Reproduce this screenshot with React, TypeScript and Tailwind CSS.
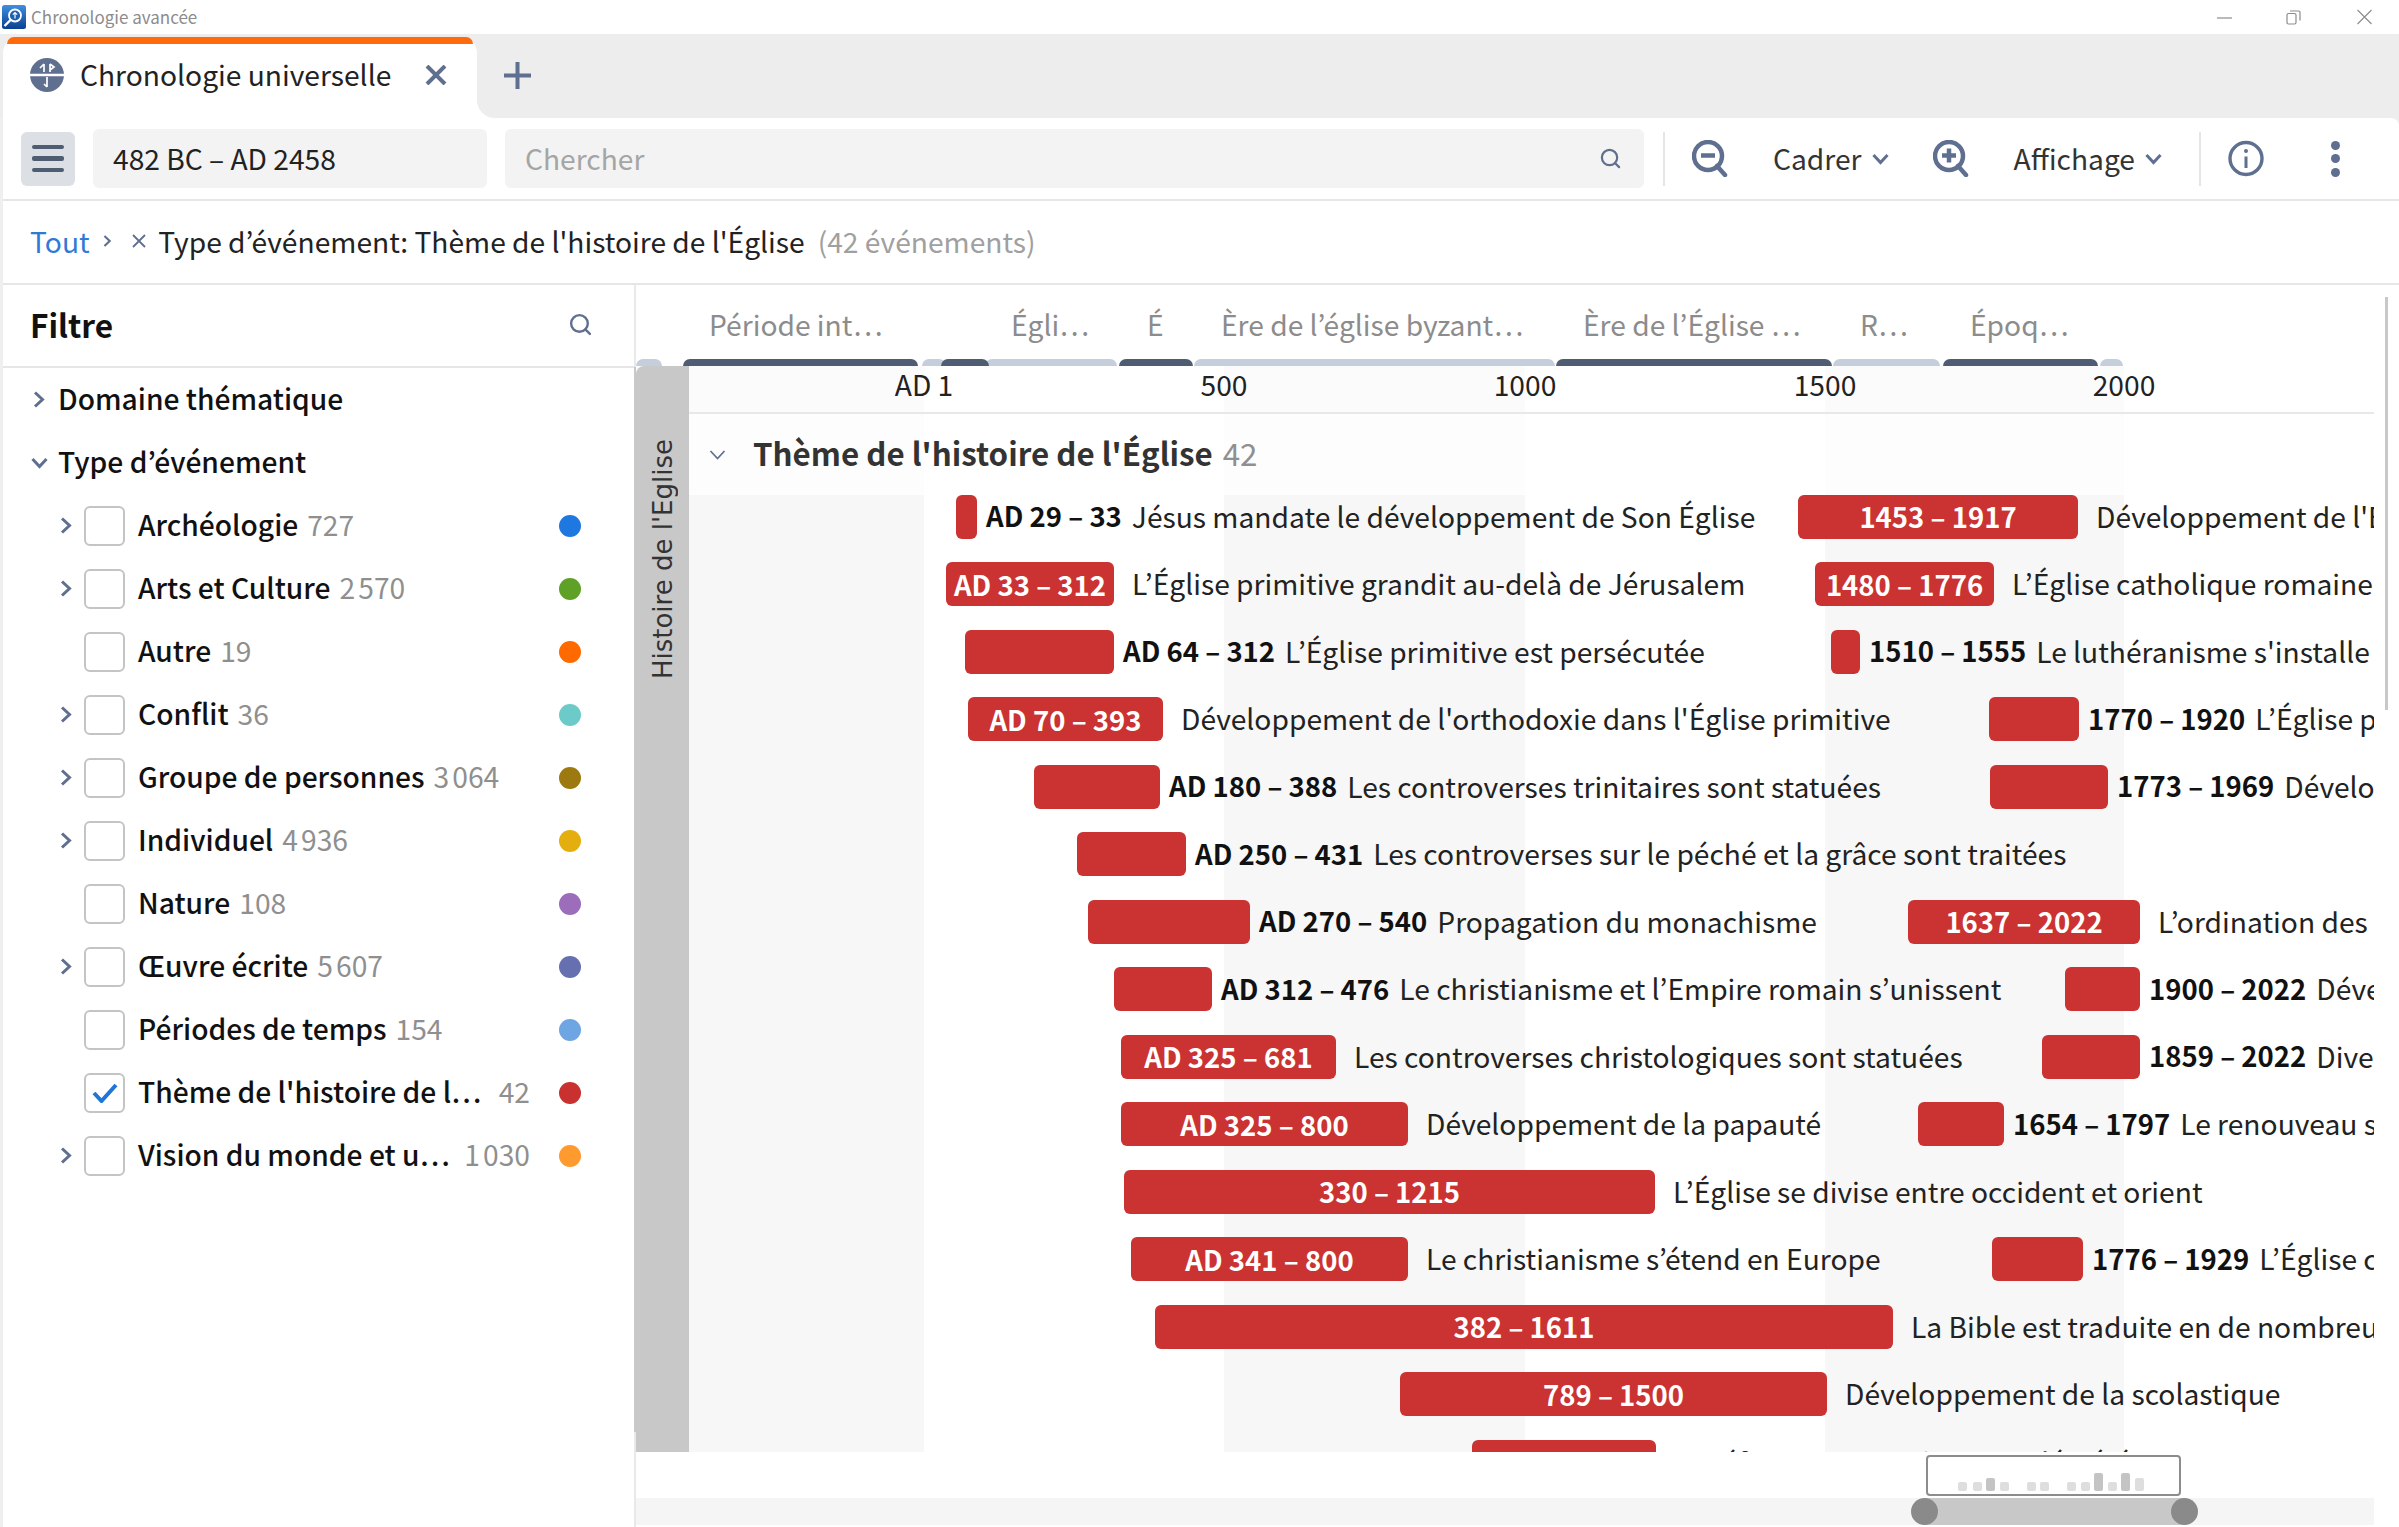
import { Search } from "lucide-react";

const CHART_LEFT = 689;

type TimelineEvent = {
  x: number;
  w: number;
  range: string;
  text: string;
  inside?: boolean;
};

const ROWS: TimelineEvent[][] = [
  [
    { x: 956, w: 21, range: "AD 29 – 33", text: "Jésus mandate le développement de Son Église" },
    { x: 1798, w: 280, range: "1453 – 1917", text: "Développement de l'Église", inside: true },
  ],
  [
    { x: 946, w: 168, range: "AD 33 – 312", text: "L’Église primitive grandit au-delà de Jérusalem", inside: true },
    { x: 1815, w: 179, range: "1480 – 1776", text: "L’Église catholique romaine", inside: true },
  ],
  [
    { x: 965, w: 149, range: "AD 64 – 312", text: "L’Église primitive est persécutée" },
    { x: 1831, w: 29, range: "1510 – 1555", text: "Le luthéranisme s'installe" },
  ],
  [
    { x: 968, w: 195, range: "AD 70 – 393", text: "Développement de l'orthodoxie dans l'Église primitive", inside: true },
    { x: 1989, w: 90, range: "1770 – 1920", text: "L’Église protestante" },
  ],
  [
    { x: 1034, w: 126, range: "AD 180 – 388", text: "Les controverses trinitaires sont statuées" },
    { x: 1990, w: 118, range: "1773 – 1969", text: "Développement" },
  ],
  [{ x: 1077, w: 109, range: "AD 250 – 431", text: "Les controverses sur le péché et la grâce sont traitées" }],
  [
    { x: 1088, w: 162, range: "AD 270 – 540", text: "Propagation du monachisme" },
    { x: 1908, w: 232, range: "1637 – 2022", text: "L’ordination des femmes", inside: true },
  ],
  [
    { x: 1114, w: 98, range: "AD 312 – 476", text: "Le christianisme et l’Empire romain s’unissent" },
    { x: 2065, w: 75, range: "1900 – 2022", text: "Développement" },
  ],
  [
    { x: 1121, w: 215, range: "AD 325 – 681", text: "Les controverses christologiques sont statuées", inside: true },
    { x: 2042, w: 98, range: "1859 – 2022", text: "Diversité" },
  ],
  [
    { x: 1121, w: 287, range: "AD 325 – 800", text: "Développement de la papauté", inside: true },
    { x: 1918, w: 86, range: "1654 – 1797", text: "Le renouveau spirituel" },
  ],
  [{ x: 1124, w: 531, range: "330 – 1215", text: "L’Église se divise entre occident et orient", inside: true }],
  [
    { x: 1131, w: 277, range: "AD 341 – 800", text: "Le christianisme s’étend en Europe", inside: true },
    { x: 1992, w: 91, range: "1776 – 1929", text: "L’Église catholique" },
  ],
  [{ x: 1155, w: 738, range: "382 – 1611", text: "La Bible est traduite en de nombreuses langues", inside: true }],
  [{ x: 1400, w: 427, range: "789 – 1500", text: "Développement de la scolastique", inside: true }],
  [{ x: 1472, w: 184, range: "1054 – 1350", text: "La réforme monastique est décrétée", inside: true }],
];

const ERA_LABELS = [
  { x: 709, label: "Période int…" },
  { x: 1011, label: "Égli…" },
  { x: 1147, label: "É" },
  { x: 1221, label: "Ère de l’église byzant…" },
  { x: 1583, label: "Ère de l’Église …" },
  { x: 1860, label: "R…" },
  { x: 1970, label: "Époq…" },
];

const ERA_BARS = [
  { x: 636, w: 26, dark: false },
  { x: 683, w: 235, dark: true },
  { x: 922, w: 24, dark: false },
  { x: 941, w: 48, dark: true },
  { x: 985, w: 132, dark: false },
  { x: 1119, w: 74, dark: true },
  { x: 1194, w: 361, dark: false },
  { x: 1556, w: 276, dark: true },
  { x: 1833, w: 107, dark: false },
  { x: 1943, w: 155, dark: true },
  { x: 2100, w: 23, dark: false },
];

const TICKS = [
  { x: 924, label: "AD 1" },
  { x: 1224, label: "500" },
  { x: 1525, label: "1000" },
  { x: 1825, label: "1500" },
  { x: 2124, label: "2000" },
];

const STRIPES = [
  { x: 689, w: 235 },
  { x: 1224, w: 301 },
  { x: 1825, w: 299 },
];

const FILTERS = [
  { label: "Archéologie", count: "727", color: "#1e78e0", expand: true },
  { label: "Arts et Culture", count: "2\u202f570", color: "#5ea126", expand: true },
  { label: "Autre", count: "19", color: "#ff6a00" },
  { label: "Conflit", count: "36", color: "#6ccbc9", expand: true },
  { label: "Groupe de personnes", count: "3\u202f064", color: "#9c7a10", expand: true },
  { label: "Individuel", count: "4\u202f936", color: "#e5ae0f", expand: true },
  { label: "Nature", count: "108", color: "#9b6dba" },
  { label: "Œuvre écrite", count: "5\u202f607", color: "#6670b0", expand: true },
  { label: "Périodes de temps", count: "154", color: "#6ea5e3" },
  { label: "Thème de l'histoire de l…", count: "42", color: "#c93131", checked: true, fill: true },
  { label: "Vision du monde et u…", count: "1\u202f030", color: "#ff9a2e", expand: true, fill: true },
];

const MINI_BARS = [
  { x: 32, h: 9 },
  { x: 47, h: 9 },
  { x: 60, h: 13, dark: true },
  { x: 74, h: 9 },
  { x: 101, h: 9 },
  { x: 114, h: 9 },
  { x: 141, h: 9 },
  { x: 155, h: 9 },
  { x: 168, h: 18, dark: true },
  { x: 182, h: 9 },
  { x: 195, h: 18, dark: true },
  { x: 209, h: 13 },
];

function ChevronRight({ className = "" }: { className?: string }) {
  return (
    <svg viewBox="0 0 12 17" className={className} fill="none" stroke="currentColor" strokeWidth="3">
      <path d="M2 1.5 9.5 8.5 2 15.5" />
    </svg>
  );
}

function ChevronDown({ className = "", thin = false }: { className?: string; thin?: boolean }) {
  return (
    <svg viewBox="0 0 17 12" className={className} fill="none" stroke="currentColor" strokeWidth={thin ? 1.7 : 3}>
      <path d="M1.5 2 8.5 9.5 15.5 2" />
    </svg>
  );
}

function ZoomIcon({ plus = false }: { plus?: boolean }) {
  return (
    <svg viewBox="0 0 36 37" className="h-[37px] w-[36px] text-[#5f6f8f]" fill="none" stroke="currentColor">
      <circle cx="16" cy="16" r="14" strokeWidth="4.5" />
      <path d="M25 26 33 35" strokeWidth="4.5" strokeLinecap="round" />
      <path d="M9 15.5H23" strokeWidth="4.5" />
      {plus && <path d="M16 8.5V22.5" strokeWidth="4.5" />}
    </svg>
  );
}

function AppIcon() {
  return (
    <svg viewBox="0 0 24 24" className="ml-[2px] h-[24px] w-[24px]">
      <defs>
        <linearGradient id="appGrad" x1="0" y1="0" x2="0" y2="1">
          <stop offset="0" stopColor="#3f8fe0" />
          <stop offset="1" stopColor="#0b3f8f" />
        </linearGradient>
      </defs>
      <rect width="24" height="24" rx="2.5" fill="url(#appGrad)" />
      <circle cx="13" cy="10.5" r="6" fill="#1d5fb0" stroke="#fff" strokeWidth="1.8" />
      <path d="M8.5 15 2.5 21" stroke="#fff" strokeWidth="2.4" />
      <path d="M13 7.5V13.5M10.8 9.6 13 7.5 15.2 9.6" stroke="#fff" strokeWidth="1.2" fill="none" />
    </svg>
  );
}

function TabIcon() {
  return (
    <svg viewBox="0 0 34 34" className="h-[34px] w-[34px]">
      <circle cx="17" cy="17" r="17" fill="#5f6f8f" />
      <path d="M0 17H34" stroke="#fff" strokeWidth="2.5" />
      <path d="M14 6V14M14 6 10 10M20 6V14M20 6 24 9 20 12M17 19V29M17 29 14 26" stroke="#fff" strokeWidth="1.7" fill="none" />
    </svg>
  );
}

function WindowControls() {
  return (
    <div className="flex items-center text-[#8c8c8c]">
      <svg viewBox="0 0 15 15" className="h-[15px] w-[15px]" stroke="currentColor" fill="none">
        <path d="M0 8H15" strokeWidth="1.2" />
      </svg>
      <svg viewBox="0 0 15 15" className="ml-[54px] h-[16px] w-[15px]" stroke="currentColor" fill="none">
        <rect x="1" y="4" width="9" height="10.5" rx="1.5" strokeWidth="1.2" />
        <path d="M4 1.5H12.5A1.5 1.5 0 0 1 14 3V11" strokeWidth="1.2" />
      </svg>
      <svg viewBox="0 0 15 15" className="ml-[56px] h-[16px] w-[15px]" stroke="currentColor" fill="none">
        <path d="M0.5 0.5 14.5 14.5M14.5 0.5 0.5 14.5" strokeWidth="1.1" />
      </svg>
    </div>
  );
}

function TabBar() {
  return (
    <div className="flex h-[84px] bg-white">
      <div className="bg-[#ededed] pl-[3px] pt-[3px]">
        <div className="flex h-[81px] w-[474px] flex-col rounded-t-[16px] bg-white">
          <div className="mx-[4px] h-[7px] shrink-0 rounded-t-[12px] bg-[#ff6a0a]" />
          <div className="flex flex-1 items-center pb-[12px] pl-[27px]">
            <TabIcon />
            <span className="mb-[2px] ml-[16px] text-[28.2px] leading-none text-[#222]">Chronologie universelle</span>
            <svg viewBox="0 0 22 20" className="ml-[34px] h-[20px] w-[22px] text-[#5f6f8f]" stroke="currentColor" fill="none">
              <path d="M2 1 20 19M20 1 2 19" strokeWidth="4" />
            </svg>
          </div>
        </div>
      </div>
      <div className="flex-1 rounded-bl-[18px] bg-[#ededed] pb-[4px] pl-[27px] pt-[3px]">
        <div className="flex h-full items-center">
          <svg viewBox="0 0 27 27" className="h-[27px] w-[27px] text-[#5f6f8f]" stroke="currentColor" fill="none">
            <path d="M13.5 0V27M0 13.5H27" strokeWidth="4" />
          </svg>
        </div>
      </div>
    </div>
  );
}

function Toolbar() {
  return (
    <div className="bg-[#ededed]">
      <div className="flex h-[83px] items-center rounded-tr-[8px] border-b-2 border-[#e6e6e6] bg-white pl-[18px] text-[28.2px]">
        <div className="flex h-[54px] w-[54px] flex-col items-center justify-center gap-[7px] rounded-[6px] bg-[#dcdfe3]">
          <span className="h-[4.5px] w-[32px] rounded-[2px] bg-[#4f5d73]" />
          <span className="h-[4.5px] w-[32px] rounded-[2px] bg-[#4f5d73]" />
          <span className="h-[4.5px] w-[32px] rounded-[2px] bg-[#4f5d73]" />
        </div>
        <div className="ml-[18px] flex h-[59px] w-[394px] items-center rounded-[6px] bg-[#f3f3f3] pl-[20px] text-[#222]">
          482 BC – AD 2458
        </div>
        <div className="ml-[18px] flex h-[59px] w-[1139px] items-center justify-between rounded-[6px] bg-[#f3f3f3] pl-[20px] pr-[22px] text-[#a5a5a5]">
          <span>Chercher</span>
          <Search size={23} strokeWidth={2.3} className="text-[#5f6f8f]" />
        </div>
        <div className="ml-[19px] h-[54px] w-[2px] bg-[#e6e6e6]" />
        <div className="ml-[27px]">
          <ZoomIcon />
        </div>
        <span className="ml-[45px] text-[#333]">Cadrer</span>
        <ChevronDown className="ml-[10px] h-[12px] w-[17px] text-[#5f6f8f]" />
        <div className="ml-[44px]">
          <ZoomIcon plus />
        </div>
        <span className="ml-[45px] text-[#333]">Affichage</span>
        <ChevronDown className="ml-[10px] h-[12px] w-[17px] text-[#5f6f8f]" />
        <div className="ml-[37px] h-[54px] w-[2px] bg-[#e6e6e6]" />
        <svg viewBox="0 0 36 37" className="ml-[27px] h-[37px] w-[36px] text-[#5f6f8f]" fill="none" stroke="currentColor">
          <circle cx="18" cy="18.5" r="16" strokeWidth="3.4" />
          <path d="M18 16.5V28" strokeWidth="3" />
          <circle cx="18" cy="11" r="2" fill="currentColor" stroke="none" />
        </svg>
        <div className="ml-[67px] flex flex-col gap-[4.5px]">
          <span className="h-[9px] w-[9px] rounded-full bg-[#5f6f8f]" />
          <span className="h-[9px] w-[9px] rounded-full bg-[#5f6f8f]" />
          <span className="h-[9px] w-[9px] rounded-full bg-[#5f6f8f]" />
        </div>
      </div>
    </div>
  );
}

function Breadcrumb() {
  return (
    <div className="flex h-[84px] items-center border-b-2 border-[#e6e6e6] pb-[2px] pl-[27px] text-[28.2px]">
      <span className="text-[#2f7ad6]">Tout</span>
      <ChevronRight className="ml-[13px] h-[12px] w-[8.5px] text-[#5f6f8f]" />
      <svg viewBox="0 0 14 14" className="ml-[21px] h-[14px] w-[14px] text-[#5f6f8f]" stroke="currentColor" fill="none">
        <path d="M1 1 13 13M13 1 1 13" strokeWidth="1.8" />
      </svg>
      <span className="ml-[12px] text-[#222]">Type d’événement: Thème de l'histoire de l'Église</span>
      <span className="ml-[13px] text-[#a0a0a0]">(42 événements)</span>
    </div>
  );
}

function FilterRow({ item }: { item: (typeof FILTERS)[number] }) {
  return (
    <div className="flex h-[63px] items-center pl-[57px]">
      <div className="flex w-[24px] items-center">{item.expand && <ChevronRight className="h-[17px] w-[12px] text-[#5f6f8f]" />}</div>
      <div className="flex h-[40px] w-[41px] items-center justify-center rounded-[6px] border-2 border-[#c4c4c4]">
        {item.checked && (
          <svg viewBox="0 0 26 20" className="h-[20px] w-[26px] text-[#1f75d8]" fill="none" stroke="currentColor">
            <path d="M2 10 9.5 18 24 2" strokeWidth="4" />
          </svg>
        )}
      </div>
      <div className={"ml-[13px] flex w-[392px] items-center pb-[2px] text-[28.2px] " + (item.fill ? "justify-between" : "")}>
        <span className="font-medium text-[#111]">{item.label}</span>
        <span className="ml-[9px] text-[#8f8f8f]">{item.count}</span>
      </div>
      <span className="ml-[29px] h-[22px] w-[22px] shrink-0 rounded-full" style={{ backgroundColor: item.color }} />
    </div>
  );
}

function Sidebar() {
  return (
    <aside className="relative w-[633px] shrink-0 border-r-2 border-[#e9e9e9]">
      <div className="flex h-[83px] items-center justify-between border-b-2 border-[#e6e6e6] pb-[2px] pl-[27px] pr-[41px]">
        <span className="text-[31.6px] font-semibold text-[#111]">Filtre</span>
        <Search size={25} strokeWidth={2.3} className="text-[#5f6f8f]" />
      </div>
      <div className="flex h-[63px] items-center pl-[30px] text-[28.2px] font-medium text-[#111]">
        <ChevronRight className="h-[17px] w-[12px] text-[#5f6f8f]" />
        <span className="mb-[2px] ml-[13px]">Domaine thématique</span>
      </div>
      <div className="flex h-[63px] items-center pl-[28px] text-[28.2px] font-medium text-[#111]">
        <ChevronDown className="h-[12px] w-[17px] text-[#5f6f8f]" />
        <span className="mb-[2px] ml-[10px]">Type d’événement</span>
      </div>
      {FILTERS.map((item) => (
        <FilterRow key={item.label} item={item} />
      ))}
      <div className="absolute -right-[2px] top-[82px] h-[1065px] w-[2px] bg-[#c8c8c8]" />
    </aside>
  );
}

function EventItem({ event }: { event: TimelineEvent }) {
  return (
    <div className="absolute top-0 flex h-full items-center whitespace-nowrap text-[28.2px]" style={{ left: event.x - CHART_LEFT }}>
      <div
        className="flex h-[44px] items-center justify-center overflow-hidden rounded-[6px] bg-[#cb3232] text-[27.5px] font-semibold text-white"
        style={{ width: event.w }}
      >
        {event.inside && event.range}
      </div>
      {!event.inside && <span className="mb-[2px] ml-[9px] text-[27.5px] font-semibold text-[#111]">{event.range}</span>}
      <span className={"mb-[2px] text-[#222] " + (event.inside ? "ml-[18px]" : "ml-[10px]")}>{event.text}</span>
    </div>
  );
}

function EraHeader() {
  return (
    <div className="relative h-[81px] text-[28.2px] text-[#8c8c8c]">
      {ERA_LABELS.map((era) => (
        <span key={era.x} className="absolute top-[19px] whitespace-nowrap leading-[40px]" style={{ left: era.x - 636 }}>
          {era.label}
        </span>
      ))}
      {ERA_BARS.map((bar) => (
        <div
          key={bar.x}
          className={"absolute bottom-0 h-[7px] rounded-t-[7px] " + (bar.dark ? "z-10 bg-[#4f5d73]" : "bg-[#c5cfdc]")}
          style={{ left: bar.x - 636, width: bar.w }}
        />
      ))}
    </div>
  );
}

function Timeline() {
  return (
    <div className="flex h-[1086px]">
      <div className="flex w-[53px] shrink-0 justify-center rounded-tl-[8px] bg-[#c8c8c8] pt-[73px]">
        <span className="h-fit rotate-180 whitespace-nowrap font-['DejaVu_Sans',sans-serif] text-[26px] leading-none text-[#333] [writing-mode:vertical-rl]">
          Histoire de l'Eglise
        </span>
      </div>
      <div className="relative w-[1685px] shrink-0 overflow-hidden">
        {STRIPES.map((stripe) => (
          <div
            key={stripe.x}
            className="absolute bottom-0 top-0 bg-[#f7f7f7]"
            style={{ left: stripe.x - CHART_LEFT, width: stripe.w }}
          />
        ))}
        <div className="relative h-[48px] border-b-2 border-[#e8e8e8] bg-white/50 text-[28.2px] text-[#222]">
          {TICKS.map((tick) => (
            <span
              key={tick.x}
              className="absolute top-0 -translate-x-1/2 leading-[36px]"
              style={{ left: tick.x - CHART_LEFT }}
            >
              {tick.label}
            </span>
          ))}
        </div>
        <div className="relative flex h-[81px] items-start bg-white/80 pl-[20px] pt-[14px]">
          <ChevronDown thin className="mt-[21px] h-[12px] w-[17px] text-[#5f6f8f]" />
          <span className="ml-[27px] text-[31.3px] font-semibold leading-[50px] text-[#333]">
            Thème de l'histoire de l'Église
          </span>
          <span className="ml-[10px] text-[31.3px] leading-[50px] text-[#8f8f8f]">42</span>
        </div>
        <div className="relative -mt-[12px]">
          {ROWS.map((row, index) => (
            <div key={index} className="relative h-[67.5px]">
              {row.map((event) => (
                <EventItem key={event.range} event={event} />
              ))}
            </div>
          ))}
        </div>
      </div>
      <div className="relative flex-1">
        <div className="absolute -top-[69px] left-[11px] h-[413px] w-[3px] bg-[#c8c8c8]" />
      </div>
    </div>
  );
}

function RangeSlider() {
  return (
    <div className="h-[75px] pt-[3px]">
      <div className="relative ml-[1290px] h-[41px] w-[255px] rounded-[4px] border-2 border-[#8c8c8c] bg-white">
        {MINI_BARS.map((bar) => (
          <span
            key={bar.x}
            className={"absolute bottom-[3px] w-[9px] rounded-[2px] " + (bar.dark ? "bg-[#c4c4c4]" : "bg-[#dedede]")}
            style={{ left: bar.x - 2, height: bar.h }}
          />
        ))}
      </div>
      <div className="relative mt-[2px] h-[27px] w-[1738px] bg-[#f5f5f5]">
        <div className="absolute left-[1288px] h-full w-[261px] bg-[#c8c8c8]" />
        <span className="absolute left-[1275px] h-[27px] w-[27px] rounded-full bg-[#8a8a8a]" />
        <span className="absolute left-[1535px] h-[27px] w-[27px] rounded-full bg-[#8a8a8a]" />
      </div>
    </div>
  );
}

export default function App() {
  return (
    <div className="h-[1527px] w-[2399px] overflow-hidden bg-white font-['Noto_Sans_CJK_KR','Noto_Sans_CJK_JP',sans-serif]">
      <div className="flex h-[34px] items-center justify-between pr-[27px]">
        <div className="flex items-center">
          <AppIcon />
          <span className="ml-[5px] text-[17px] text-[#8c8c8c]">Chronologie avancée</span>
        </div>
        <WindowControls />
      </div>
      <TabBar />
      <div className="border-l-[3px] border-[#efefef]">
        <Toolbar />
        <Breadcrumb />
        <div className="flex h-[1242px]">
          <Sidebar />
          <div className="w-[1763px]">
            <EraHeader />
            <Timeline />
            <RangeSlider />
          </div>
        </div>
      </div>
    </div>
  );
}
